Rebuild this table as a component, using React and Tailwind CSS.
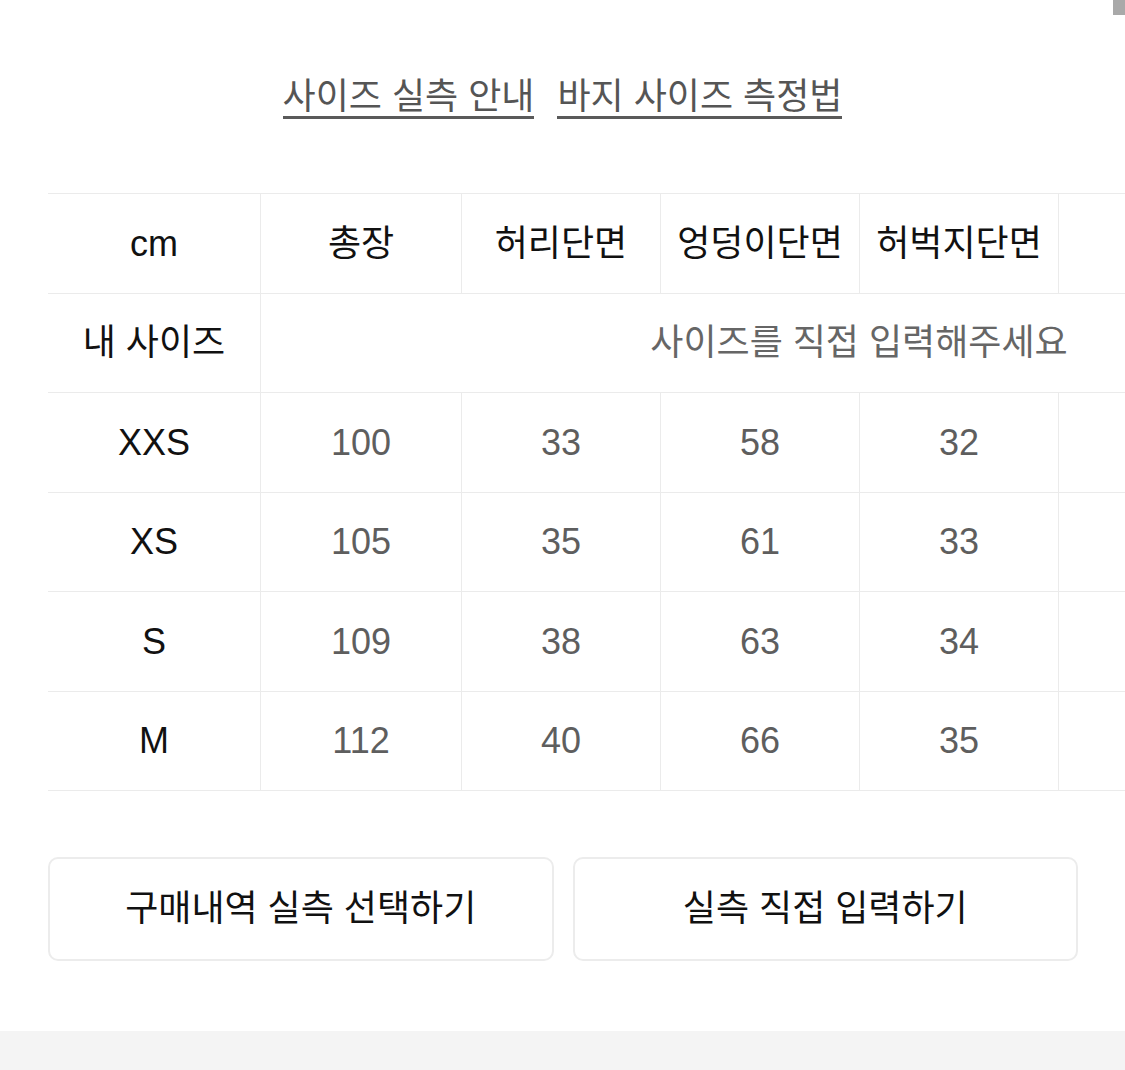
const headers = ['총장', '허리단면', '엉덩이단면', '허벅지단면', '', ''];

const rows = [
  { size: 'XXS', values: ['100', '33', '58', '32', '', ''] },
  { size: 'XS', values: ['105', '35', '61', '33', '', ''] },
  { size: 'S', values: ['109', '38', '63', '34', '', ''] },
  { size: 'M', values: ['112', '40', '66', '35', '', ''] },
];

// column widths include the right border line
const colW = ['w-[201px]', 'w-[199px]', 'w-[199px]', 'w-[199px]', 'w-[199px]', 'w-[199px]'];
const rowH = ['h-[99px]', 'h-[100px]', 'h-[99px]', 'h-[100px]', 'h-[99px]'];

const App = () => (
  <div className="relative w-[1125px] h-[1070px] bg-white overflow-hidden flex flex-col text-[36px] font-['Liberation_Sans','Noto_Sans_CJK_KR',sans-serif]">
    {/* scroll thumb */}
    <div className="absolute top-0 right-0 w-[12px] h-[15px] bg-[#a9a9a9]" />

    {/* Top links */}
    <div className="flex justify-center gap-[23px] pt-[77px] leading-[39px] text-[#555]">
      <span className="border-b-[3px] border-[#5a5a5a]">사이즈 실측 안내</span>
      <span className="border-b-[3px] border-[#5a5a5a]">바지 사이즈 측정법</span>
    </div>

    {/* Size table */}
    <div className="mt-[74px] pl-[48px] overflow-hidden leading-none">
      <div className="w-[1420px] border-t border-[#ebebeb]">
        {/* header */}
        <div className="flex h-[100px] border-b border-[#ebebeb]">
          <div className="w-[213px] shrink-0 flex items-center justify-center border-r border-[#ebebeb] text-[#111]">
            cm
          </div>
          {headers.map((h, i) => (
            <div
              key={i}
              className={`${colW[i]} shrink-0 flex items-center justify-center border-r border-[#ebebeb] text-[#111]`}
            >
              {h}
            </div>
          ))}
        </div>

        {/* my size */}
        <div className={`flex ${rowH[0]} border-b border-[#ebebeb]`}>
          <div className="w-[213px] shrink-0 flex items-center justify-center border-r border-[#ebebeb] text-[#111]">
            내 사이즈
          </div>
          <div className="w-[1196px] shrink-0 flex items-center justify-center text-[#666]">
            사이즈를 직접 입력해주세요
          </div>
        </div>

        {rows.map((r, ri) => (
          <div key={r.size} className={`flex ${rowH[ri + 1]} border-b border-[#ebebeb]`}>
            <div className="w-[213px] shrink-0 flex items-center justify-center border-r border-[#ebebeb] text-[#111]">
              {r.size}
            </div>
            {r.values.map((v, i) => (
              <div
                key={i}
                className={`${colW[i]} shrink-0 flex items-center justify-center border-r border-[#ebebeb] text-[#5e5e5e]`}
              >
                {v}
              </div>
            ))}
          </div>
        ))}
      </div>
    </div>

    {/* Buttons */}
    <div className="mt-[66px] flex gap-[19px] pl-[48px] pr-[47px]">
      <button className="flex-1 h-[104px] rounded-[10px] border-2 border-[#ececec] bg-white text-[#111]">
        구매내역 실측 선택하기
      </button>
      <button className="flex-1 h-[104px] rounded-[10px] border-2 border-[#ececec] bg-white text-[#111]">
        실측 직접 입력하기
      </button>
    </div>

    <div className="mt-[70px] flex-1 bg-[#f4f4f4]" />
  </div>
);

export default App;
